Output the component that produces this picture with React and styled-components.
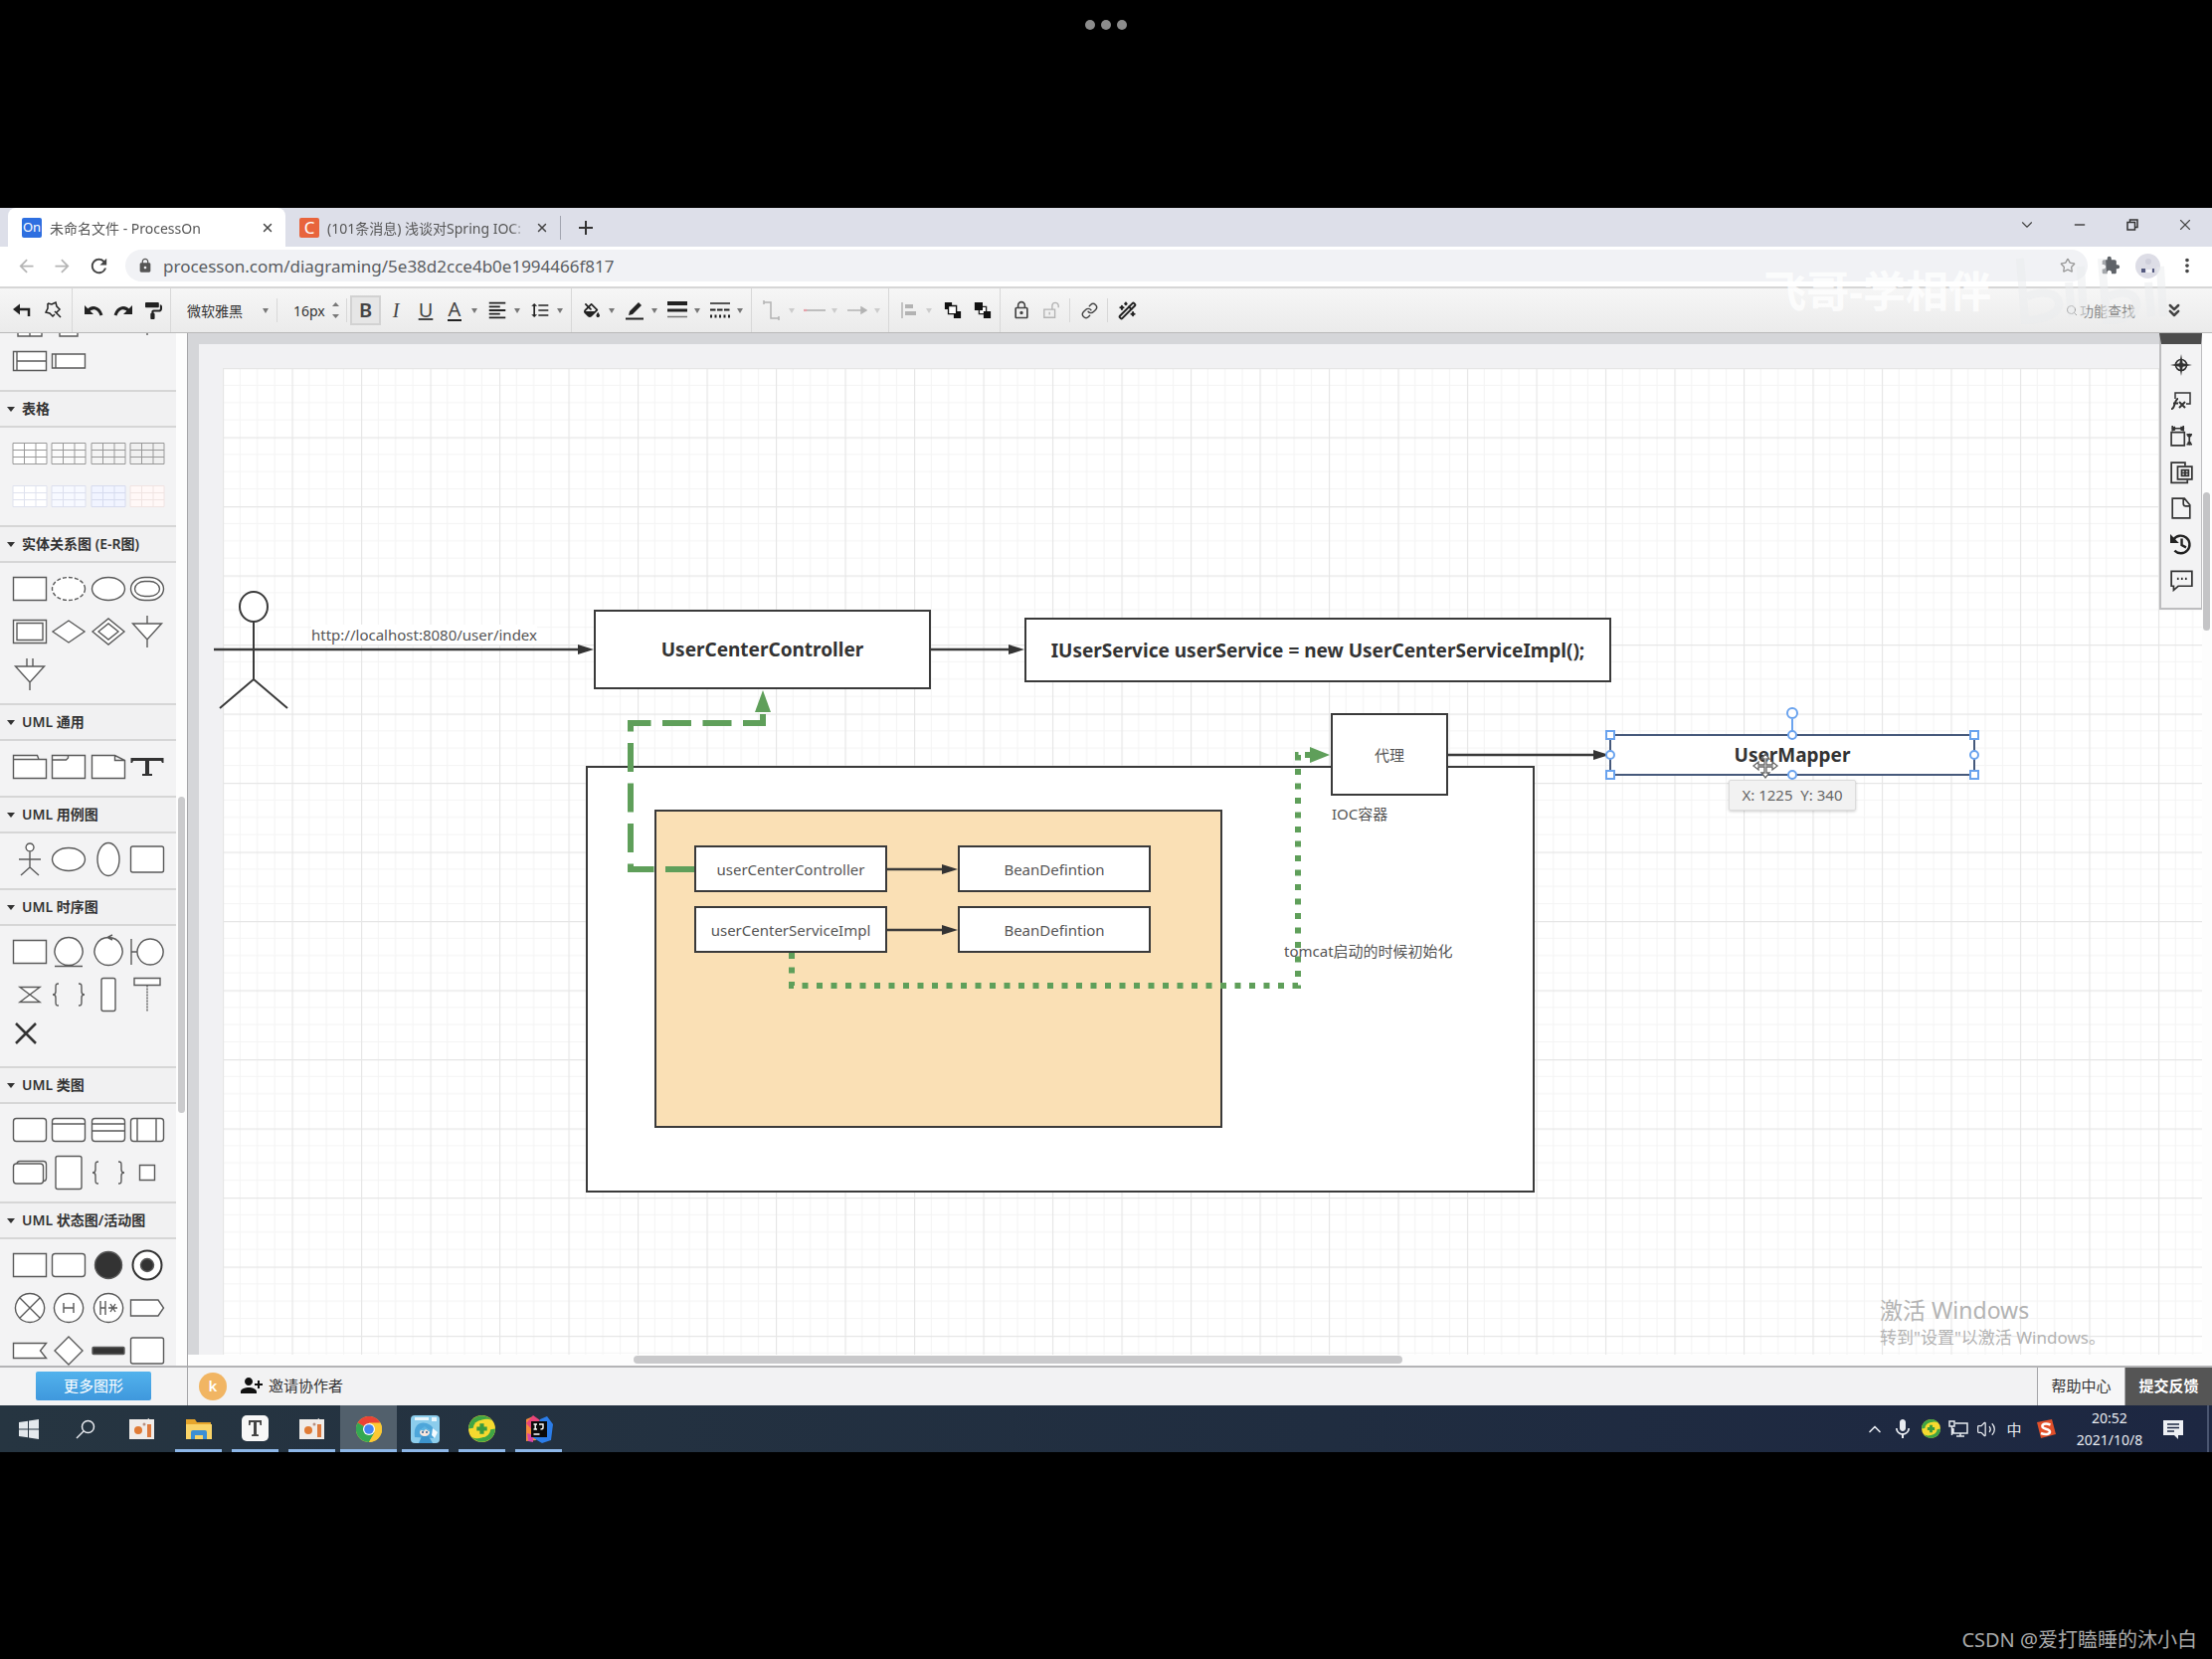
import React, { useState } from "react";
import styled, { createGlobalStyle } from "styled-components";
import {
  ChevronDown,
  ChevronUp,
  ChevronsDown,
  Link as LinkIcon,
  Minus,
  Search,
  Star,
  Volume2,
  WandSparkles,
  X,
} from "lucide-react";
import {
  MdArrowBack,
  MdArrowForward,
  MdExtension,
  MdFormatAlignLeft,
  MdFormatLineSpacing,
  MdLock,
  MdLockOutline,
  MdMic,
  MdMoreVert,
  MdPersonAddAlt1,
  MdRefresh,
} from "react-icons/md";
import { FaFillDrip, FaPaintRoller } from "react-icons/fa";

const GlobalStyle = createGlobalStyle`
  * {
    box-sizing: border-box;
  }
  body {
    margin: 0;
    background: #000;
    font-family: "Noto Sans", "Noto Sans CJK SC", sans-serif;
    font-size: 15px;
    color: #333;
  }
  button, input, select {
    font: inherit;
    color: inherit;
    border: 0;
    padding: 0;
    margin: 0;
    background: none;
  }
  a {
    color: inherit;
    text-decoration: none;
  }
`;

const Page = styled.div`
  display: flex;
  flex-direction: column;
  height: 100vh;
  background: #000;
`;
const TopBar = styled.header`
  display: flex;
  flex: none;
  justify-content: center;
  gap: 6px;
  height: 209px;
  padding-top: 20px;
`;
const Dot = styled.span`
  width: 10px;
  height: 10px;
  border-radius: 50%;
  background: #8c8c8c;
`;
const Credit = styled.footer`
  display: flex;
  flex: none;
  align-items: flex-end;
  justify-content: flex-end;
  height: 208px;
  padding: 0 15px 4px 0;
  color: #a9a9a9;
  font-family: "Noto Sans", "Noto Sans CJK SC", sans-serif;
  font-size: 20px;
  line-height: 30px;
`;
const Screen = styled.main`
  position: relative;
  display: flex;
  flex: 1;
  flex-direction: column;
  min-height: 0;
  background: #fff;
`;

/* browser */
const TabStrip = styled.div`
  display: flex;
  flex: none;
  align-items: stretch;
  height: 39px;
  padding-left: 8px;
  background: #dddfe9;
`;
const Tab = styled.div`
  display: flex;
  align-items: center;
  gap: 8px;
  width: ${(p) => (p.$active ? 279 : 276)}px;
  padding: 0 10px 0 14px;
  border-radius: 8px 8px 0 0;
  background: ${(p) => (p.$active ? "#fff" : "transparent")};
  color: #555;
  font-size: 14px;
`;
const Favicon = styled.span`
  flex: none;
  width: 20px;
  height: 20px;
  border-radius: 2px;
  background: ${(p) => p.$color};
  color: #fff;
  font-size: ${(p) => p.$size}px;
  line-height: 19px;
  text-align: center;
`;
const TabTitle = styled.span`
  flex: 1;
  overflow: hidden;
  white-space: nowrap;
  mask-image: linear-gradient(90deg, #000 92%, transparent);
`;
const PlainButton = styled.button`
  display: flex;
  flex: none;
  align-items: center;
  justify-content: center;
  width: ${(p) => p.$w || 16}px;
  color: ${(p) => p.$color || "#444"};
  svg {
    display: block;
  }
`;
const NewTab = styled(PlainButton)`
  align-self: center;
  width: 50px;
  height: 24px;
  border-left: 1px solid #a2a5b0;
`;
const WindowButtons = styled.div`
  display: flex;
  margin-left: auto;
  padding-bottom: 6px;
`;
const AddressRow = styled.div`
  display: flex;
  flex: none;
  align-items: center;
  height: 42px;
  padding: 0 8px 2px;
  border-bottom: 2px solid #d6d6d6;
`;
const AddressPill = styled.label`
  display: flex;
  flex: 1;
  align-items: center;
  gap: 10px;
  height: 32px;
  margin: 0 8px;
  padding: 0 12px;
  border-radius: 16px;
  background: #f1f2f5;
  color: #555;
`;
const AddressInput = styled.input`
  flex: 1;
  outline: 0;
  color: #5a5d62;
  font-size: 17px;
`;
const Profile = styled.span`
  display: flex;
  width: 25px;
  height: 25px;
  margin: 0 10px;
  border-radius: 50%;
  background: #dddde6;
`;

/* editor toolbar */
const Toolbar = styled.div`
  display: flex;
  flex: none;
  height: 45px;
  border-bottom: 1px solid #b9b9b9;
  background: linear-gradient(#f6f6f6, #ebebeb);
`;
const Group = styled.div`
  display: flex;
  align-items: center;
  padding: 0 2px 0 6px;
  border-right: 1px solid ${(p) => (p.$last ? "transparent" : "#d8d8d8")};
`;
const Tool = styled.button`
  display: flex;
  flex: none;
  align-items: center;
  justify-content: center;
  width: ${(p) => p.$w || 30}px;
  height: 30px;
  color: ${(p) => (p.$off ? "#b3b3b3" : "#222")};
`;
const BoldTool = styled(Tool)`
  margin-left: 3px;
  border: 2px solid #d2d2d2;
  background: #e6e6e6;
`;
const SplitTool = styled.button`
  display: grid;
  flex: none;
  grid-template-columns: 28px 15px;
  align-items: center;
  justify-items: center;
  width: 43px;
  height: 30px;
  color: ${(p) => (p.$off ? "#b3b3b3" : "#222")};
`;
const Caret = styled.span`
  justify-self: start;
  margin-left: 3px;
  border: 3px solid transparent;
  border-top: 5px solid ${(p) => (p.$off ? "#ccc" : "#777")};
  border-bottom: 0;
`;
const Glyph = styled.span`
  color: #444;
  font-size: 20px;
  line-height: 24px;
  font-weight: ${(p) => (p.$bold ? 600 : 400)};
  font-style: ${(p) => (p.$italic ? "italic" : "normal")};
  font-family: ${(p) =>
    p.$italic ? '"Liberation Serif", serif' : '"Noto Sans", sans-serif'};
  text-decoration: ${(p) => (p.$under ? "underline" : "none")};
`;
const ColorGlyph = styled(Glyph)`
  border-bottom: 2px solid #222;
  line-height: 20px;
  padding: 0 1px;
`;
const FontPicker = styled.label`
  display: flex;
  align-items: center;
  width: 101px;
  height: 24px;
  padding: 0 8px 0 10px;
  border-right: 1px solid #d8d8d8;
`;
const FontSelect = styled.select`
  flex: 1;
  appearance: none;
  outline: 0;
  font-size: 14px;
`;
const SizePicker = styled.label`
  display: flex;
  align-items: center;
  gap: 5px;
  width: 70px;
  height: 24px;
  padding-left: 16px;
  border-right: 1px solid #d8d8d8;
`;
const SizeInput = styled.input`
  width: 34px;
  outline: 0;
  font-size: 14px;
`;
const Divider = styled.span`
  width: 1px;
  height: 24px;
  margin: 0 4px 0 3px;
  background: #d8d8d8;
`;
const FeatureSearch = styled.label`
  display: flex;
  align-items: center;
  gap: 2px;
  margin-left: auto;
  color: #888;
`;
const FeatureInput = styled.input`
  width: 72px;
  outline: 0;
  font-size: 14px;
  &::placeholder {
    color: #888;
  }
`;
const ExpandButton = styled(PlainButton)`
  margin-right: 15px;
`;

/* shape library */
const Workspace = styled.div`
  display: flex;
  flex: 1;
  min-height: 0;
`;
const Sidebar = styled.aside`
  display: flex;
  flex: none;
  flex-direction: column;
  width: 189px;
  border-right: 1px solid #a5a5a8;
  background: #f3f3f4;
`;
const Library = styled.div`
  display: flex;
  flex: 1;
  min-height: 0;
  overflow: hidden;
`;
const LibraryList = styled.div`
  flex: 1;
  margin-top: -41px;
`;
const SideTrack = styled.div`
  width: 11px;
  padding: 466px 2px 0;
  background: #fdfdfd;
`;
const SideThumb = styled.div`
  height: 318px;
  border-radius: 4px;
  background: #cbcbcd;
`;
const SectionTitle = styled.h3`
  display: flex;
  align-items: center;
  gap: 7px;
  height: 38px;
  margin: 0;
  padding-left: 7px;
  border: solid #d6d6d6;
  border-width: 2px 0;
  background: #f1f1f2;
  font-size: 14px;
  font-weight: 600;
  line-height: 20px;
`;
const Triangle = styled.span`
  border: 4px solid transparent;
  border-top: 5px solid #333;
  border-bottom: 0;
`;
const ShapeGrid = styled.div`
  display: grid;
  grid-template-columns: repeat(4, 1fr);
  grid-auto-rows: 43px;
  padding: 4px 9px 8px 10px;
`;
const ShapeButton = styled.button`
  display: flex;
  align-items: center;
  justify-content: center;
`;
const MoreBar = styled.div`
  display: flex;
  flex: none;
  align-items: center;
  justify-content: center;
  height: 40px;
  padding-bottom: 2px;
  border-top: 2px solid #b4b4b6;
`;
const MoreButton = styled.button`
  width: 116px;
  height: 29px;
  border-radius: 2px;
  background: linear-gradient(#52b2ec, #3f98dd);
  color: #fff;
  font-size: 15px;
  line-height: 26px;
`;

/* canvas */
const Main = styled.section`
  display: flex;
  flex: 1;
  flex-direction: column;
  min-width: 0;
`;
const EditorRow = styled.div`
  display: flex;
  flex: 1;
  min-height: 0;
`;
const Viewport = styled.div`
  position: relative;
  display: flex;
  flex: 1;
  min-width: 0;
  padding: 11px 0 0 11px;
  background: #d5d6d9;
`;
const Surface = styled.div`
  position: relative;
  display: flex;
  flex: 1;
  padding: 24px 0 0 24px;
  background: #f1f1f3;
  overflow: hidden;
`;
const Sheet = styled.svg`
  flex: 1;
  background: #fff;
`;
const Layer = styled.svg`
  position: absolute;
  inset: 0;
  width: 100%;
  height: 100%;
  pointer-events: none;
`;
const Node = styled.div`
  position: absolute;
  left: ${(p) => p.$x}px;
  top: ${(p) => p.$y}px;
  width: ${(p) => p.$w}px;
  height: ${(p) => p.$h}px;
  display: flex;
  align-items: center;
  justify-content: center;
  border: 2px solid ${(p) => (p.$selected ? "#46597b" : "#3a3a3a")};
  background: ${(p) => p.$fill || "#fff"};
  color: ${(p) => (p.$bold ? "#333" : "#555")};
  font-size: ${(p) => (p.$bold ? 19 : 15)}px;
  font-weight: ${(p) => (p.$bold ? 700 : 400)};
  line-height: 20px;
  white-space: nowrap;
`;
const Label = styled.span`
  position: absolute;
  left: ${(p) => p.$x}px;
  top: ${(p) => p.$y}px;
  background: ${(p) => (p.$solid ? "#fff" : "transparent")};
  color: #555;
  line-height: 20px;
  white-space: nowrap;
`;
const PositionTip = styled.div`
  position: absolute;
  left: 1538px;
  top: 438px;
  width: 128px;
  border: 1px solid #dcdcdc;
  border-radius: 2px;
  background: #f2f2f2;
  box-shadow: 0 1px 3px rgba(0, 0, 0, 0.2);
  color: #666;
  line-height: 29px;
  text-align: center;
  white-space: pre;
`;
const ActivateNote = styled.div`
  position: absolute;
  right: 92px;
  bottom: 4px;
  width: 232px;
  color: #b3b3b3;
  font-size: 17px;
  line-height: 26px;
  white-space: nowrap;
`;
const ActivateTitle = styled.div`
  font-size: 23px;
  line-height: 30px;
`;
const Dock = styled.nav`
  position: absolute;
  right: 0;
  top: 0;
  display: flex;
  flex-direction: column;
  width: 43px;
  padding: 3px 0 10px;
  border: solid #bdbdbf;
  border-width: 0 1px 2px 2px;
  border-top: 11px solid #4c4c4c;
  background: #f3f3f4;
`;
const DockButton = styled.button`
  display: flex;
  align-items: center;
  justify-content: center;
  height: 36px;
`;
const VTrack = styled.div`
  width: 10px;
  padding: 160px 2px 0 1px;
  background: #fdfdfd;
`;
const VThumb = styled.div`
  height: 139px;
  border-radius: 4px;
  background: #c4c4c6;
`;
const HTrack = styled.div`
  flex: none;
  height: 11px;
  padding: 1px 0;
  background: #fdfdfd;
`;
const HThumb = styled.div`
  width: 38%;
  height: 8px;
  margin-left: 22%;
  border-radius: 4px;
  background: #c9c9cb;
`;
const StatusBar = styled.div`
  display: flex;
  flex: none;
  align-items: center;
  height: 40px;
  padding-left: 11px;
  border-top: 2px solid #b4b4b6;
  background: #f2f2f3;
  line-height: 20px;
`;
const Collaborator = styled.span`
  width: 28px;
  height: 28px;
  border-radius: 50%;
  background: #f1b563;
  color: #fff;
  font-weight: 600;
  line-height: 26px;
  text-align: center;
`;
const Invite = styled.button`
  display: flex;
  align-items: center;
  gap: 5px;
  margin-left: 13px;
  padding-bottom: 3px;
`;
const StatusLink = styled.a`
  display: flex;
  align-items: center;
  justify-content: center;
  align-self: stretch;
  width: 88px;
  margin-left: ${(p) => (p.$push ? "auto" : "0")};
  padding-bottom: 3px;
  border-left: 1px solid #a5a5a8;
  background: ${(p) => (p.$dark ? "#555" : "#f6f6f7")};
  color: ${(p) => (p.$dark ? "#fff" : "#333")};
  font-weight: ${(p) => (p.$dark ? 600 : 400)};
`;

/* windows taskbar */
const Taskbar = styled.div`
  display: flex;
  flex: none;
  height: 47px;
  background: linear-gradient(90deg, #263541, #202d40 60%, #1d2742);
  color: #e8ebf0;
`;
const TaskButton = styled.button`
  display: flex;
  align-items: center;
  justify-content: center;
  width: 57px;
  background: ${(p) => (p.$active ? "#52606c" : "transparent")};
  background-image: ${(p) =>
    p.$open ? "linear-gradient(#8db7e8, #8db7e8)" : "none"};
  background-size: ${(p) => (p.$active ? "57px" : "47px")} 3px;
  background-repeat: no-repeat;
  background-position: center bottom;
`;
const Tray = styled.div`
  display: flex;
  align-items: stretch;
  margin-left: auto;
`;
const TrayButton = styled.button`
  display: flex;
  align-items: center;
  justify-content: center;
  width: ${(p) => p.$w || 28}px;
  font-size: 15px;
`;
const Clock = styled.time`
  display: flex;
  flex-direction: column;
  align-items: center;
  justify-content: center;
  width: 92px;
  font-size: 14px;
  line-height: 22px;
`;
const PeekEdge = styled.span`
  width: 5px;
  margin-left: 16px;
  border-left: 2px solid #4a5570;
`;
const StreamMark = styled.div`
  position: absolute;
  right: 42px;
  top: 42px;
  display: flex;
  align-items: center;
  gap: 24px;
  color: rgba(255, 255, 255, 0.8);
  font-size: 43px;
  font-weight: 700;
  line-height: 84px;
  pointer-events: none;
`;

/* every library shape is centred on 0,0 */
const tableShape = (stroke, fill) => (
  <g stroke={stroke} fill={fill} strokeWidth="1">
    <path d="M-17-10.500h34v21h-34z" />
    <path d="M-17-3.500h34M-17 3.500h34M-5.500-10.500v21M6-10.500v21" />
  </g>
);
const braces = (
  <path
    d="M-10-11c-3 0-3 1-3 4v4c0 2-1 3-3 3 2 0 3 1 3 3v4c0 3 0 4 3 4M10-11c3 0 3 1 3 4v4c0 2 1 3 3 3-2 0-3 1-3 3v4c0 3 0 4-3 4"
    fill="none"
  />
);
const rect = <path d="M-16.500-11.500h33v23h-33z" />;
const roundRect = <rect x="-16.500" y="-11.500" width="33" height="23" rx="3" />;

const SECTIONS = [
  {
    shapes: [
      <path d="M-12 10h24v8h-24zM0 10v8" />,
      <path d="M-9 10h18v8h-18z" />,
      null,
      <path d="M0 10v7" />,
      <path d="M-16.500-9.500h33v19h-33zM-13-9.500v19M-13 0h29.500" />,
      <path d="M-16.500-7h33v14h-33zM-13-7v14" />,
    ],
  },
  {
    title: "表格",
    shapes: [
      tableShape("#999", "#fff"),
      tableShape("#999", "#fafafa"),
      tableShape("#999", "#f4f4f4"),
      tableShape("#999", "#f0f0f0"),
      tableShape("#dfe2ee", "#fff"),
      tableShape("#dcdfee", "#f7f9ff"),
      tableShape("#d6dbee", "#f1f4ff"),
      tableShape("#f0e4e2", "#fff8f7"),
    ],
  },
  {
    title: "实体关系图 (E-R图)",
    shapes: [
      rect,
      <ellipse rx="16.500" ry="11.500" strokeDasharray="4 2" />,
      <ellipse rx="16.500" ry="11.500" />,
      <g>
        <rect x="-16.500" y="-11.500" width="33" height="23" rx="14" ry="11.500" />
        <rect x="-12.500" y="-7.500" width="25" height="15" rx="10" ry="7.500" />
      </g>,
      <path d="M-16.500-11.500h33v23h-33zM-13-8.500h26v17h-26z" />,
      <path d="M-16 0L0-11 16 0 0 11z" />,
      <path d="M-16 0L0-13 16 0 0 13zM-10 0L0-8 10 0 0 8z" />,
      <path d="M-14.500-8h29L0 8zM0-16v8M0 8v8" />,
      <path d="M-14.500-8h29L0 8zM-3-16v8M3-16v8M0 8v8" />,
    ],
  },
  {
    title: "UML 通用",
    shapes: [
      <path d="M-16.500-11.500h24l1.500 4h7.500v19h-33zM-16.500-7.500H9" />,
      <path d="M-16.500-11.500h33v23h-33zM-16.500-7h14l2-2v-2.500" />,
      <path d="M-16.500-11.500h23l10 5v18h-33zM6.500-11.500v5h10" />,
      <path d="M-16.500-9v5h1.500l1-2H-2V7h-3v2H5V7H2V-6h12l1 2h1.500v-5z" fill="#333" stroke="none" />,
    ],
  },
  {
    title: "UML 用例图",
    shapes: [
      <path d="M0-16a4 4 0 1 0 .1 0zM0-8V8M-11 0h22M0 8l-9 8M0 8l9 8" />,
      <ellipse rx="16.500" ry="11.500" />,
      <ellipse rx="11" ry="16.500" />,
      <rect x="-16.500" y="-13" width="33" height="26" rx="2" />,
    ],
  },
  {
    title: "UML 时序图",
    shapes: [
      rect,
      <path d="M0-14.500a14 14 0 1 0 .1 0zM-14 14.500h28" />,
      <path d="M0-14.500a14 14 0 1 0 .1 0zM4-17l-5 2.500 5 2.500" />,
      <path d="M3-13a13 13 0 1 0 .1 0zM-16-13v26M-16 0h6" />,
      <path d="M-10-7.500h20L-10 7.500h20z" />,
      braces,
      <rect x="-7" y="-16.500" width="14" height="33" rx="2" />,
      <g>
        <path d="M-13-16.500h26v7h-26z" />
        <path d="M0-9.500v26" strokeDasharray="2 1" />
      </g>,
      <path d="M-14-14l20 20M6-14l-20 20" strokeWidth="2.500" stroke="#333" />,
    ],
  },
  {
    title: "UML 类图",
    shapes: [
      roundRect,
      <g>
        {roundRect}
        <path d="M-16.500-6h33" />
      </g>,
      <g>
        {roundRect}
        <path d="M-16.500-6h33M-16.500 1h33" />
      </g>,
      <g>
        {roundRect}
        <path d="M-10-11.500v23M9-11.500v23" />
      </g>,
      <g>
        <rect x="-13" y="-11.500" width="29.500" height="20" rx="3" />
        <rect x="-16.500" y="-9" width="30" height="20" rx="3" />
      </g>,
      <rect x="-13" y="-16.500" width="26" height="33" rx="2" />,
      braces,
      <path d="M-7.500-7.500h15v15h-15z" />,
    ],
  },
  {
    title: "UML 状态图/活动图",
    shapes: [
      rect,
      roundRect,
      <circle r="13.500" fill="#333" />,
      <g>
        <circle r="14.500" strokeWidth="2" stroke="#333" />
        <circle r="6.500" fill="#333" />
      </g>,
      <path d="M0-14.500a14.500 14.500 0 1 0 .1 0zM-10-10l20 20M10-10l-20 20" />,
      <path d="M0-14.500a14.500 14.500 0 1 0 .1 0zM-5-5V5M5-5V5M-5 0H5" />,
      <path d="M0-14.500a14.500 14.500 0 1 0 .1 0zM-8-7V7M-3-7V7M-8 0h5M0 0h9M2-4l5 8M7-4L2 4" />,
      <path d="M-16.500-8H11l5.500 8-5.500 8h-27.500z" />,
      <path d="M-16.500-7.500h33l-6 7.500 6 7.500h-33z" />,
      <path d="M0-14L14 0 0 14-14 0z" />,
      <rect x="-16" y="-3.500" width="32" height="7" rx="1" fill="#333" />,
      <rect x="-16.500" y="-13" width="33" height="26" rx="2" />,
    ],
  },
];

const Icon = ({ size = 20, children }) => (
  <svg
    width={size}
    height={size}
    viewBox="0 0 20 20"
    fill="none"
    stroke="currentColor"
    strokeWidth="1.500"
  >
    {children}
  </svg>
);

const ShapeLibrary = () => (
  <Library>
    <LibraryList>
      {SECTIONS.map((s, i) => (
        <section key={i}>
          {s.title && (
            <SectionTitle>
              <Triangle />
              {s.title}
            </SectionTitle>
          )}
          <ShapeGrid>
            {s.shapes.map((shape, j) => (
              <ShapeButton key={j} aria-label={`shape ${j + 1}`}>
                <svg
                  width="38"
                  height="38"
                  viewBox="-19 -19 38 38"
                  fill="#fff"
                  stroke="#5a5a5a"
                  strokeWidth="1.400"
                >
                  {shape}
                </svg>
              </ShapeButton>
            ))}
          </ShapeGrid>
        </section>
      ))}
    </LibraryList>
    <SideTrack>
      <SideThumb />
    </SideTrack>
  </Library>
);

const Split = ({ off, label, children }) => (
  <SplitTool $off={off} aria-label={label}>
    {children}
    <Caret $off={off} />
  </SplitTool>
);

const EditorToolbar = () => {
  const [fontSize, setFontSize] = useState("16px");

  return (
    <Toolbar>
      <Group>
        <Tool $w={32} aria-label="返回">
          <Icon>
            <path d="M17 16V9H6" strokeWidth="2.500" />
            <path d="M1 9l7-5.500v11z" fill="currentColor" stroke="none" />
          </Icon>
        </Tool>
        <Tool $w={32} aria-label="美化">
          <Icon>
            <path d="M4 3l4 1 4-2 1 4 3 3-3 3M4 3v5l-2 4 4 1 3 3 2-2M11 11l6 6" />
          </Icon>
        </Tool>
      </Group>
      <Group>
        <Tool aria-label="撤销">
          <Icon>
            <path d="M4 11c4-5 11-5 14 4" strokeWidth="3" />
            <path d="M1 5v9h9z" fill="currentColor" stroke="none" />
          </Icon>
        </Tool>
        <Tool aria-label="恢复">
          <Icon>
            <path d="M16 11c-4-5-11-5-14 4" strokeWidth="3" />
            <path d="M19 5v9h-9z" fill="currentColor" stroke="none" />
          </Icon>
        </Tool>
        <Tool aria-label="格式刷">
          <FaPaintRoller size={17} />
        </Tool>
      </Group>
      <Group>
        <FontPicker>
          <FontSelect aria-label="字体" defaultValue="微软雅黑">
            <option>微软雅黑</option>
          </FontSelect>
          <Caret />
        </FontPicker>
        <SizePicker>
          <SizeInput
            aria-label="字号"
            value={fontSize}
            onChange={(e) => setFontSize(e.target.value)}
          />
          <svg width="7" height="16" viewBox="0 0 7 16" fill="#777">
            <path d="M0 4L3.500 0 7 4zM0 12l3.500 4L7 12z" />
          </svg>
        </SizePicker>
        <BoldTool $w={31} aria-label="粗体">
          <Glyph $bold>B</Glyph>
        </BoldTool>
        <Tool aria-label="斜体">
          <Glyph $italic>I</Glyph>
        </Tool>
        <Tool aria-label="下划线">
          <Glyph $under>U</Glyph>
        </Tool>
        <Split label="文字颜色">
          <ColorGlyph>A</ColorGlyph>
        </Split>
        <Split label="对齐">
          <MdFormatAlignLeft size={22} />
        </Split>
        <Split label="行距">
          <MdFormatLineSpacing size={20} />
        </Split>
      </Group>
      <Group>
        <Split label="填充">
          <FaFillDrip size={16} />
        </Split>
        <Split label="线条颜色">
          <Icon>
            <path d="M1 18.500h18" strokeWidth="2" />
            <path d="M4 15l1-4 9-9 3 3-9 9z" fill="currentColor" stroke="none" />
          </Icon>
        </Split>
        <Split label="线条宽度">
          <Icon>
            <path d="M0 3h20" strokeWidth="4" />
            <path d="M0 10h20" strokeWidth="3" />
            <path d="M0 16.500h20" stroke="#777" />
          </Icon>
        </Split>
        <Split label="线条样式">
          <Icon>
            <path d="M0 3h20" strokeWidth="2" stroke="#555" />
            <path d="M0 9.500h20" strokeWidth="2" strokeDasharray="5.500 1.500" />
            <path d="M0 16h20" strokeWidth="3" strokeDasharray="2 2.500" />
          </Icon>
        </Split>
      </Group>
      <Group>
        <Split off label="连线类型">
          <Icon>
            <path d="M2 2h7v16h8M2 0v4M17 16v4" />
          </Icon>
        </Split>
        <Split off label="起点">
          <Icon size={22}>
            <path d="M0 10h20" />
            <path d="M0 10h3" stroke="#e6a2aa" strokeWidth="2" />
          </Icon>
        </Split>
        <Split off label="终点">
          <Icon size={20}>
            <path d="M0 10h15" />
            <path d="M14 7l5 3-5 3z" fill="currentColor" />
          </Icon>
        </Split>
      </Group>
      <Group>
        <Split off label="排列">
          <Icon>
            <path d="M3 2v16" />
            <path d="M6 4h8v4H6zM6 11h11v4H6z" fill="currentColor" stroke="none" />
          </Icon>
        </Split>
        <Tool aria-label="置于顶层">
          <Icon size={18}>
            <path d="M1 1h8v8H1zM11 11h8v8h-8z" fill="#111" stroke="none" />
            <path d="M5 5h9v9H5z" fill="#fff" stroke="#111" />
          </Icon>
        </Tool>
        <Tool aria-label="置于底层">
          <Icon size={18}>
            <path d="M6 6h8v8H6z" fill="#fff" />
            <path d="M1 1h9v9H1zM11 11h8v8h-8z" fill="#111" stroke="none" />
          </Icon>
        </Tool>
      </Group>
      <Group $last>
        <Tool aria-label="锁定">
          <MdLockOutline size={20} color="#444" />
        </Tool>
        <Tool $off aria-label="解锁">
          <Icon size={18}>
            <path d="M2 9h12v9H2zM11 9V5a3.500 3.500 0 0 1 7 0v2M8 12v3" />
          </Icon>
        </Tool>
        <Divider />
        <Tool aria-label="链接">
          <LinkIcon size={17} color="#444" />
        </Tool>
        <Divider />
        <Tool aria-label="魔法棒">
          <WandSparkles size={19} strokeWidth={2.5} />
        </Tool>
      </Group>
      <FeatureSearch>
        <Search size={12} />
        <FeatureInput placeholder="功能查找" aria-label="功能查找" />
      </FeatureSearch>
      <ExpandButton $w={46} aria-label="展开">
        <ChevronsDown size={20} strokeWidth={3} />
      </ExpandButton>
    </Toolbar>
  );
};

const NODES = [
  { x: 397, y: 267, w: 339, h: 80, bold: true, text: "UserCenterController" },
  {
    x: 830,
    y: 275,
    w: 590,
    h: 65,
    bold: true,
    text: "IUserService userService = new UserCenterServiceImpl();",
  },
  { x: 498, y: 504, w: 194, h: 47, text: "userCenterController" },
  { x: 498, y: 565, w: 194, h: 47, text: "userCenterServiceImpl" },
  { x: 763, y: 504, w: 194, h: 47, text: "BeanDefintion" },
  { x: 763, y: 565, w: 194, h: 47, text: "BeanDefintion" },
  { x: 1138, y: 371, w: 118, h: 83, text: "代理" },
  { x: 1418, y: 392, w: 368, h: 42, bold: true, selected: true, text: "UserMapper" },
];

const ARROWS = [
  [15, 397, 307],
  [736, 830, 307],
  [692, 763, 528],
  [692, 763, 589],
  [1256, 1418, 413],
];

const Connections = () => (
  <Layer fill="none" stroke="#3a3a3a" strokeWidth="2">
    <ellipse cx="55" cy="264" rx="14" ry="15" fill="#fff" />
    <path d="M55 279v58M21 366l34-29 34 29" />
    {ARROWS.map(([from, to, y]) => (
      <g key={`${from}-${y}`}>
        <path d={`M${from} ${y}H${to - 10}`} strokeWidth="2.500" />
        <path d={`M${to - 16} ${y - 5}l16 5-16 5z`} fill="#333" stroke="none" />
      </g>
    ))}
    <path
      d="M498 528H434V381H567V369"
      stroke="#5f9f5a"
      strokeWidth="6"
      strokeDasharray="29 11.500"
    />
    <path d="M567 348l8 22h-16z" fill="#5f9f5a" stroke="none" />
    <path
      d="M596 612V645H1105V413H1113"
      stroke="#5f9f5a"
      strokeWidth="6"
      strokeDasharray="6 8.500"
    />
    <path d="M1137 413l-20-8v5h-5v6h5v5z" fill="#5f9f5a" stroke="none" />
  </Layer>
);

const Selection = () => (
  <Layer fill="#fff" stroke="#6aa3ee" strokeWidth="2">
    <path d="M1602 377v12" />
    {[1419, 1785].map((x) =>
      [393, 433].map((y) => (
        <rect key={`${x}-${y}`} x={x - 4} y={y - 4} width="8" height="8" />
      ))
    )}
    {[
      [1602, 371, 5],
      [1602, 393, 4],
      [1602, 433, 4],
      [1419, 413, 4],
      [1785, 413, 4],
    ].map(([x, y, r]) => (
      <circle key={`${x}-${y}`} cx={x} cy={y} r={r} />
    ))}
    <g stroke="#666" strokeWidth="1.300">
      <path d="M1575 412l4 5h-3v6h6v-3l5 4-5 4v-3h-6v6h3l-4 5-4-5h3v-6h-6v3l-5-4 5-4v3h6v-6h-3z" />
    </g>
  </Layer>
);

const Canvas = () => (
  <Viewport>
    <Surface>
      <Sheet>
        <defs>
          <pattern
            id="grid"
            width="60"
            height="60"
            patternUnits="userSpaceOnUse"
            patternTransform="scale(1.1583)"
          >
            <path
              d="M15 0v60M30 0v60M45 0v60M0 15h60M0 30h60M0 45h60"
              stroke="#f4f4f4"
            />
            <path d="M0 0v60M0 0h60" stroke="#e6e6e6" strokeWidth="2" />
          </pattern>
        </defs>
        <rect width="100%" height="100%" fill="url(#grid)" />
      </Sheet>
      <Node $x={389} $y={424} $w={954} $h={429} />
      <Node $x={458} $y={468} $w={571} $h={320} $fill="#fae0b5" />
      <Connections />
      {NODES.map((n, i) => (
        <Node
          key={i}
          $x={n.x}
          $y={n.y}
          $w={n.w}
          $h={n.h}
          $bold={n.bold}
          $selected={n.selected}
        >
          {n.text}
        </Node>
      ))}
      <Label $x={113} $y={282} $solid>
        http://localhost:8080/user/index
      </Label>
      <Label $x={1139} $y={462}>
        IOC容器
      </Label>
      <Label $x={1091} $y={600}>
        tomcat启动的时候初始化
      </Label>
      <Selection />
      <PositionTip>{"X: 1225  Y: 340"}</PositionTip>
      <ActivateNote>
        <ActivateTitle>激活 Windows</ActivateTitle>
        转到"设置"以激活 Windows。
      </ActivateNote>
    </Surface>
    <Dock>
      <DockButton aria-label="导航">
        <Icon size={22}>
          <circle cx="10" cy="10" r="5" />
          <path d="M10 0l1.500 8.500L20 10l-8.500 1.500L10 20l-1.500-8.500L0 10l8.500-1.500z" fill="#333" stroke="none" />
        </Icon>
      </DockButton>
      <DockButton aria-label="公式">
        <Icon size={20}>
          <path d="M4 8V2h15v11h-4" />
          <path d="M0 18c4 1 3-10 7-10M2 12.500h5M8 11l6 6M14 11l-6 6" strokeWidth="2" />
        </Icon>
      </DockButton>
      <DockButton aria-label="度量">
        <Icon size={22}>
          <path d="M1 6h12v12H1z" />
          <path d="M2 2.500h10M2 0v5M12 0v5M17.500 8v9M15 8h5M15 17h5M4.500 1L2 2.500 4.500 4M9.500 1L12 2.500 9.500 4M16 10l1.500-2 1.500 2M16 15l1.500 2 1.500-2" />
        </Icon>
      </DockButton>
      <DockButton aria-label="页面">
        <Icon size={23}>
          <path d="M15 16v2.500H1V1h12v3" />
          <path d="M6.500 4.500H19v11H6.500z" />
          <path d="M10 7.500h6v5h-6zM10 10h6M13 7.500v5" />
        </Icon>
      </DockButton>
      <DockButton aria-label="文件">
        <Icon size={22}>
          <path d="M2 1h11l5 6v12H2zM12 1v5c0 1 1 2 2 2h4" />
        </Icon>
      </DockButton>
      <DockButton aria-label="历史">
        <Icon size={22}>
          <path d="M3 6a8 8 0 1 1 1 10" stroke="#222" strokeWidth="2.200" />
          <path d="M10.500 5v6l4 2" stroke="#222" strokeWidth="2.200" />
          <path d="M0 1v8h8z" fill="#222" stroke="none" />
        </Icon>
      </DockButton>
      <DockButton aria-label="评论">
        <Icon size={23}>
          <path d="M1 2h18v13H7l-4 3.500V15H1z" />
          <path d="M6 8.500h1.500M9.500 8.500H11M13 8.500h1.500" strokeWidth="2" />
        </Icon>
      </DockButton>
    </Dock>
  </Viewport>
);

const DeskTool = () => (
  <svg width="26" height="22" viewBox="0 0 26 22">
    <path d="M0 1h18l2-1v1h5v20H0z" fill="#f0ece9" />
    <circle cx="9" cy="12" r="4" fill="#e07b35" />
    <circle cx="15" cy="6" r="1.500" fill="#b89080" />
    <path d="M18 6h4v13h-4z" fill="#dd7a3e" />
  </svg>
);

const TASKS = [
  {
    name: "开始",
    icon: (
      <svg width="20" height="20" viewBox="0 0 20 20" fill="#e4e9ed">
        <path d="M0 3l9-1.300V9.500H0zM10 1.500L20 0v9.500H10zM0 10.500h9v7.800L0 17zM10 10.500h10V20l-10-1.500z" />
      </svg>
    ),
  },
  {
    name: "搜索",
    icon: (
      <Icon>
        <circle cx="12.500" cy="7.500" r="6" />
        <path d="M8 12l-7 7" />
      </Icon>
    ),
  },
  { name: "桌面工具", icon: <DeskTool /> },
  {
    name: "文件资源管理器",
    open: true,
    icon: (
      <svg width="26" height="22" viewBox="0 0 26 22">
        <path d="M0 1h9l2 3h14v17H0z" fill="#e5a52c" />
        <path d="M0 6h26v15H0z" fill="#f9d468" />
        <path d="M5 21v-7q0-2 2-2h12q2 0 2 2v7h-4v-4H9v4z" fill="#3d8fd4" />
      </svg>
    ),
  },
  {
    name: "Typora",
    open: true,
    icon: (
      <svg width="27" height="27" viewBox="0 0 27 27">
        <rect width="27" height="26" rx="5" fill="#f7f7f7" />
        <path d="M7 5h13v5h-1.500l-.5-3h-3v12l2 .5V21h-7v-1.500l2-.5V7H9l-.500 3H7z" fill="#444" />
      </svg>
    ),
  },
  { name: "录屏", open: true, icon: <DeskTool /> },
  {
    name: "Chrome",
    open: true,
    active: true,
    icon: (
      <svg width="26" height="26" viewBox="0 0 26 26">
        <circle cx="13" cy="13" r="13" fill="#fcc934" />
        <path d="M13 13L1.700 6.500A13 13 0 0 1 24.300 6.500z" fill="#ea4335" />
        <path d="M13 13L1.700 6.500A13 13 0 0 0 13 26l5.600-9.800z" fill="#34a853" />
        <path d="M13 13V6.500h11.300A13 13 0 0 1 13 26l5.600-9.800z" fill="#fcc934" />
        <circle cx="13" cy="13" r="6" fill="#fff" />
        <circle cx="13" cy="13" r="4.800" fill="#4285f4" />
      </svg>
    ),
  },
  {
    name: "动漫",
    open: true,
    icon: (
      <svg width="29" height="28" viewBox="0 0 29 28">
        <rect width="29" height="28" rx="4" fill="#8ccdec" />
        <path d="M4 2h14v3H4zM21 2h5v4h-5z" fill="#e9f6fc" />
        <path d="M4 22C2 9 10 6 16 8s9 7 7 15z" fill="#4ea6da" />
        <ellipse cx="14" cy="17" rx="5" ry="4" fill="#fbe6dc" />
        <path d="M8 16l6-5 7 6-3-1-3-2-2 2-2-1z" fill="#5db4e2" />
        <circle cx="12" cy="17" r="1" fill="#2c5f94" />
        <circle cx="16" cy="17" r="1" fill="#2c5f94" />
        <path d="M8 28l3-7h7l4 7z" fill="#3c93cc" />
        <path d="M22 13l5 4-3 6-3-3z" fill="#f4fbff" />
      </svg>
    ),
  },
  {
    name: "360",
    open: true,
    icon: <Shield size={27} />,
  },
  {
    name: "IntelliJ IDEA",
    open: true,
    icon: (
      <svg width="28" height="28" viewBox="0 0 28 28">
        <path d="M1 4l7-3 7 6-4 18-10 1z" fill="#f58a3c" />
        <path d="M8 0l7 5-6 12-8-9z" fill="#e8457a" />
        <path d="M15 4l7-3 6 8-2 16-9 3-10-6z" fill="#2b7de9" />
        <path d="M2 18l6 2v7l-5-1z" fill="#d645a8" />
        <path d="M6 6h16v16H6z" fill="#0b0b0b" />
        <path d="M8.500 9h3.500M10.200 9v5M8.500 14h3.500M14 9h4v3.500q0 1.500-2.500 1.500M8.500 19h6" stroke="#fff" strokeWidth="1.400" fill="none" />
      </svg>
    ),
  },
];

function Shield({ size }) {
  return (
    <svg width={size} height={size} viewBox="0 0 26 26">
      <circle cx="13" cy="13" r="13" fill="#f6d92f" />
      <path d="M0 13A13 13 0 0 1 23 5C15 1 8 6 6 12z" fill="#3fa544" />
      <path d="M26 13A13 13 0 0 1 3 21c8 4 15-1 17-7z" fill="#3fa544" />
      <circle cx="13" cy="13" r="8.500" fill="#f6d92f" />
      <path d="M13 8v10M8 13h10" stroke="#3a9a3f" strokeWidth="4" />
    </svg>
  );
}

const SystemTray = () => (
  <Tray>
    <TrayButton aria-label="更多">
      <ChevronUp size={20} />
    </TrayButton>
    <TrayButton aria-label="麦克风">
      <MdMic size={24} />
    </TrayButton>
    <TrayButton aria-label="360">
      <Shield size={19} />
    </TrayButton>
    <TrayButton aria-label="网络">
      <Icon>
        <path d="M7 4h12v10H5V9M1 2h5v5H1zM3.500 7v9M8 17h8M12 14v3" />
      </Icon>
    </TrayButton>
    <TrayButton aria-label="音量">
      <Volume2 size={20} strokeWidth={1.5} />
    </TrayButton>
    <TrayButton aria-label="输入法">中</TrayButton>
    <TrayButton $w={36} aria-label="搜狗">
      <svg width="20" height="20" viewBox="0 0 20 20">
        <path d="M1 3l15-3 4 15-15 4z" fill="#e2502a" />
        <path d="M14.500 5.500C9 3.500 6 5 6.500 7.500S14 9.500 14 12.500 9 15.500 5 14" stroke="#fff" strokeWidth="2.500" fill="none" />
      </svg>
    </TrayButton>
    <Clock>
      <span>20:52</span>
      <span>2021/10/8</span>
    </Clock>
    <TrayButton $w={36} aria-label="通知">
      <svg width="20" height="20" viewBox="0 0 20 20">
        <path d="M0 1h20v15h-5v4l-4-4H0z" fill="#eef0f4" />
        <path d="M4 5h12M4 8.500h12M4 12h7" stroke="#1d2742" strokeWidth="1.500" />
      </svg>
    </TrayButton>
    <PeekEdge />
  </Tray>
);

const Browser = () => {
  const [url, setUrl] = useState(
    "processon.com/diagraming/5e38d2cce4b0e1994466f817"
  );

  return (
    <>
      <TabStrip>
        <Tab $active>
          <Favicon $color="#2e6fe0" $size={13}>
            On
          </Favicon>
          <TabTitle>未命名文件 - ProcessOn</TabTitle>
          <PlainButton aria-label="关闭标签页">
            <X size={14} strokeWidth={2.5} />
          </PlainButton>
        </Tab>
        <Tab>
          <Favicon $color="#e8643c" $size={17}>
            C
          </Favicon>
          <TabTitle>(101条消息) 浅谈对Spring IOC:</TabTitle>
          <PlainButton aria-label="关闭标签页">
            <X size={14} strokeWidth={2.5} />
          </PlainButton>
        </Tab>
        <NewTab aria-label="新标签页">
          <svg width="14" height="14" viewBox="0 0 14 14" stroke="#333" strokeWidth="2">
            <path d="M7 0v14M0 7h14" />
          </svg>
        </NewTab>
        <WindowButtons>
          <PlainButton $w={53} aria-label="搜索标签页">
            <ChevronDown size={18} strokeWidth={1.5} />
          </PlainButton>
          <PlainButton $w={53} aria-label="最小化">
            <Minus size={16} />
          </PlainButton>
          <PlainButton $w={53} aria-label="还原">
            <svg width="12" height="12" viewBox="0 0 12 12" fill="none" stroke="#333" strokeWidth="1.500">
              <path d="M1 3.500h7.500V11H1zM3.500 3V1H11v7.500H9" />
            </svg>
          </PlainButton>
          <PlainButton $w={54} aria-label="关闭">
            <X size={18} strokeWidth={1.5} />
          </PlainButton>
        </WindowButtons>
      </TabStrip>
      <AddressRow>
        <PlainButton $w={36} $color="#b5b5b5" aria-label="后退">
          <MdArrowBack size={21} />
        </PlainButton>
        <PlainButton $w={36} $color="#b5b5b5" aria-label="前进">
          <MdArrowForward size={21} />
        </PlainButton>
        <PlainButton $w={38} aria-label="刷新">
          <MdRefresh size={23} />
        </PlainButton>
        <AddressPill>
          <MdLock size={16} />
          <AddressInput
            aria-label="地址"
            value={url}
            onChange={(e) => setUrl(e.target.value)}
          />
          <Star size={16} color="#999" />
        </AddressPill>
        <PlainButton $w={30} $color="#5f6368" aria-label="扩展程序">
          <MdExtension size={20} />
        </PlainButton>
        <Profile>
          <svg width="25" height="25" viewBox="0 0 25 25">
            <circle cx="13" cy="8" r="3" fill="#cfcfdb" />
            <path d="M6 15h4v4H6zM17 15h2v4h-2z" fill="#555a80" />
            <path d="M11 16h5v3h-5z" fill="#f5f5fa" />
          </svg>
        </Profile>
        <PlainButton $w={34} aria-label="更多">
          <MdMoreVert size={22} />
        </PlainButton>
      </AddressRow>
    </>
  );
};

const App = () => (
  <Page>
    <GlobalStyle />
    <TopBar>
      <Dot />
      <Dot />
      <Dot />
    </TopBar>
    <Screen>
      <Browser />
      <EditorToolbar />
      <Workspace>
        <Sidebar>
          <ShapeLibrary />
          <MoreBar>
            <MoreButton>更多图形</MoreButton>
          </MoreBar>
        </Sidebar>
        <Main>
          <EditorRow>
            <Canvas />
            <VTrack>
              <VThumb />
            </VTrack>
          </EditorRow>
          <HTrack>
            <HThumb />
          </HTrack>
          <StatusBar>
            <Collaborator>k</Collaborator>
            <Invite>
              <MdPersonAddAlt1 size={24} color="#111" />
              邀请协作者
            </Invite>
            <StatusLink href="#help" $push>
              帮助中心
            </StatusLink>
            <StatusLink href="#feedback" $dark>
              提交反馈
            </StatusLink>
          </StatusBar>
        </Main>
      </Workspace>
      <Taskbar>
        {TASKS.map((t) => (
          <TaskButton
            key={t.name}
            aria-label={t.name}
            $open={t.open}
            $active={t.active}
          >
            {t.icon}
          </TaskButton>
        ))}
        <SystemTray />
      </Taskbar>
      <StreamMark>
        <span>飞哥-学相伴</span>
        <svg width="156" height="70" viewBox="0 0 156 70" fill="none" stroke="#e9ebed" strokeOpacity=".5" strokeWidth="8">
          <path d="M5 2l5 62c20 0 36-8 34-18s-16-12-32-6M54 26l3 34M66 10l3 50M87 2l5 62c20 0 32-8 30-18s-14-12-28-6M134 26l3 34M146 10l3 50" />
        </svg>
      </StreamMark>
    </Screen>
    <Credit>CSDN @爱打瞌睡的沐小白</Credit>
  </Page>
);

export default App;
